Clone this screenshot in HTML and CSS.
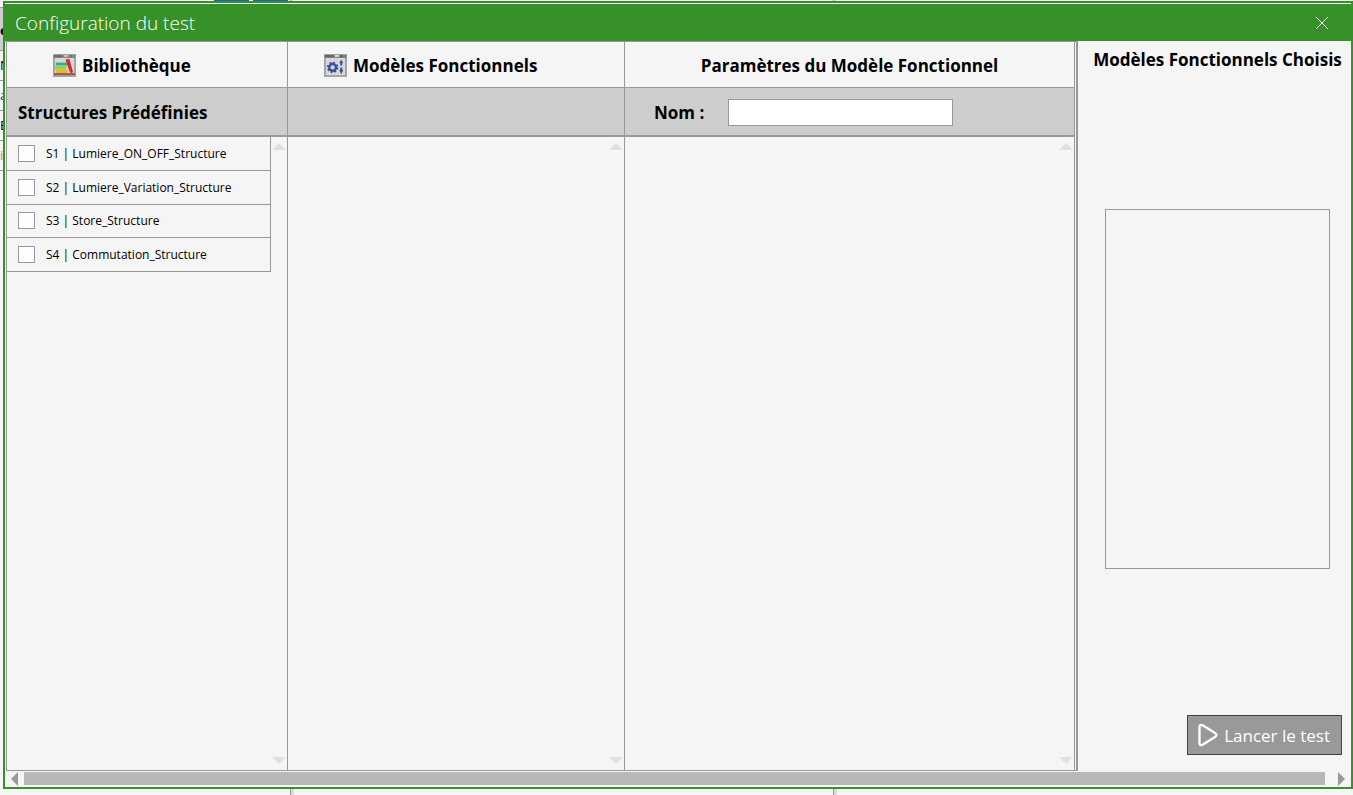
FILE: index.html
```html
<!DOCTYPE html>
<html lang="fr">
<head>
<meta charset="utf-8">
<title>Configuration du test</title>
<link rel="stylesheet" href="styles.css">
</head>
<body>
<div class="backdrop" aria-hidden="true">
  <div class="back-list">
    <div class="back-row back-head">e</div>
    <div class="back-row">N</div>
    <div class="back-row back-blue">a</div>
    <div class="back-row">E</div>
    <div class="back-row back-orange">i</div>
  </div>
  <span class="back-tab tab-one"></span>
  <span class="back-tab tab-two"></span>
  <span class="back-rule rule-one"></span>
  <span class="back-rule rule-two"></span>
</div>
<section class="dialog" role="dialog" aria-labelledby="dialog-title">
  <header class="titlebar">
    <h1 class="title" id="dialog-title">Configuration du test</h1>
    <button class="close" type="button" aria-label="Fermer">
      <svg width="12" height="12" viewBox="0 0 12 12"><path d="M0 0L12 12M12 0L0 12" stroke="#fff" fill="none"/></svg>
    </button>
  </header>
  <main class="content">
    <div class="columns">
      <section class="column library">
        <h2 class="column-head">
          <svg class="icon" width="23" height="23" viewBox="0 0 24 24">
            <path fill="#a3a3a3" d="M0 0h24v24H0z"/><path fill="#6e6e6e" d="M1 1h22v3H1z"/><path fill="#d8d8d8" d="M2 4h20v16H2z"/>
            <path fill="#c8c8c8" d="M11 1h5v2h-5z"/><path fill="#4cc34c" d="M17 1h1v2h-1zM20 1h2v2h-2z"/>
            <path fill="#1fb58f" d="M3 9h12v3H3z"/><path fill="#8ed36a" d="M2 12h12v4H2z"/><path fill="#f2b51d" d="M3 16h12v4H3z"/>
            <path fill="#d92b2b" d="M13 6l4-1 4 14-3 1z"/><path fill="#8b6147" d="M1 20h22v2H1z"/>
          </svg>
          <span>Bibliothèque</span>
        </h2>
        <div class="column-sub">Structures Prédéfinies</div>
        <div class="column-body">
          <ul class="structures">
            <li class="structure"><label class="choice"><input class="check" type="checkbox">S1 | Lumiere_ON_OFF_Structure</label></li>
            <li class="structure"><label class="choice"><input class="check" type="checkbox">S2 | Lumiere_Variation_Structure</label></li>
            <li class="structure"><label class="choice"><input class="check" type="checkbox">S3 | Store_Structure</label></li>
            <li class="structure"><label class="choice"><input class="check" type="checkbox">S4 | Commutation_Structure</label></li>
          </ul>
          <div class="vscroll"><span class="arrow up"></span><span class="arrow down"></span></div>
        </div>
      </section>
      <section class="column models">
        <h2 class="column-head">
          <svg class="icon" width="23" height="23" viewBox="0 0 24 24">
            <path fill="#a3a3a3" d="M0 0h24v24H0z"/><path fill="#666" d="M1 1h22v3H1z"/><path fill="#d8d8d8" d="M2 4h20v18H2z"/>
            <path fill="#ddd" d="M11 1h5v2h-5z"/><path fill="#4cc34c" d="M20 1h2v2h-2z"/>
            <circle cx="9" cy="14" r="3.5" fill="none" stroke="#3850a2" stroke-width="2.5"/>
            <circle cx="9" cy="14" r="5" fill="none" stroke="#3850a2" stroke-width="2" stroke-dasharray="2 1.93"/>
            <path fill="#3850a2" d="M18 6l2 3-1 1v2h-2v-2l-1-1zM17 14h2v2l1 1-2 4-2-4 1-1z"/>
          </svg>
          <span>Modèles Fonctionnels</span>
        </h2>
        <div class="column-sub"></div>
        <div class="column-body"><div class="vscroll"><span class="arrow up"></span><span class="arrow down"></span></div></div>
      </section>
      <section class="column params">
        <h2 class="column-head">Paramètres du Modèle Fonctionnel</h2>
        <div class="column-sub"><label class="name-label" for="name">Nom :</label><input class="name-input" id="name" type="text"></div>
        <div class="column-body"><div class="vscroll"><span class="arrow up"></span><span class="arrow down"></span></div></div>
      </section>
    </div>
    <aside class="chosen">
      <h2 class="chosen-title">Modèles Fonctionnels Choisis</h2>
      <div class="chosen-list"></div>
      <button class="launch" type="button">
        <svg width="20" height="24" viewBox="0 0 20 24"><path d="M1.500 4.500V19.500Q1.500 23.500 5 21.500L17 14Q20 12 17 10L5 2.500Q1.500.5 1.500 4.500Z" fill="none" stroke="#fff" stroke-width="2.300"/></svg>
        <span>Lancer le test</span>
      </button>
    </aside>
  </main>
  <div class="hscroll"><span class="arrow left"></span><span class="thumb"></span><span class="arrow right"></span></div>
</section>
</body>
</html>
```
FILE: styles.css
```css
* { box-sizing: border-box; }
body {
  margin: 0;
  min-height: 100vh;
  display: flex;
  padding: 1px 0 6px 3px;
  background: #f5f5f5;
  color: #000;
  font-family: "Open Sans", "Noto Sans", sans-serif;
  overflow: hidden;
}
.backdrop { position: absolute; inset: 0; overflow: hidden; }
.back-list { width: 12px; padding-top: 7px; font-size: 13px; }
.back-row { height: 30px; line-height: 29px; border-bottom: 1px solid #999; }
.back-head { height: 44px; line-height: 44px; background: #cdcdcd; font-weight: 700; border-top: 1px solid #999; }
.back-blue { color: #004a80; }
.back-orange { color: #d98a1e; }
.back-tab { position: absolute; top: 0; width: 35px; height: 1px; background: #0d6eb8; }
.tab-one { left: 214px; }
.tab-two { left: 253px; }
.back-rule { position: absolute; top: 0; bottom: 0; width: 4px; border-left: 1px solid #999; background: #dcdcdc; }
.rule-one { left: 290px; }
.rule-two { left: 833px; }

.dialog {
  position: relative;
  flex: 1;
  display: flex;
  flex-direction: column;
  border: 2px solid #359128;
  background: #f5f5f5;
}
.titlebar {
  display: flex;
  align-items: center;
  justify-content: space-between;
  height: 38px;
  padding: 0 23px 0 10px;
  border-top: 1px solid #fff;
  background: #359128;
  color: #fff;
}
.title { margin: 0; font-size: 19px; font-weight: 300; line-height: 36px; }
.close { display: flex; padding: 0; border: 0; background: none; }

.content { flex: 1; display: flex; }
.columns {
  flex: 1;
  display: grid;
  grid-template-columns: 282fr 337fr 450fr;
  margin-left: 1px;
  padding-right: 1px;
  border: 1px solid #999;
  border-width: 1px 2px 1px 0;
}
.column { display: flex; flex-direction: column; border-right: 1px solid #999; min-width: 0; }
.library { border-left: 1px solid #999; }
.column-head {
  display: flex;
  align-items: center;
  gap: 6px;
  height: 46px;
  margin: 0;
  padding-top: 2px;
  border-bottom: 1px solid #999;
  font-size: 17px;
  font-weight: 700;
}
.library .column-head { padding-left: 46px; }
.models .column-head { padding-left: 36px; }
.params .column-head { justify-content: center; }
.column-sub {
  display: flex;
  align-items: center;
  height: 49px;
  padding: 1px 0 0 11px;
  border-bottom: 2px solid #999;
  background: #cdcdcd;
  font-size: 17px;
  font-weight: 700;
}
.params .column-sub { padding-left: 29px; }
.name-label { width: 74px; }
.name-input { width: 225px; height: 27px; border: 1px solid #999; background: #fff; font: inherit; }
.column-body { flex: 1; display: flex; justify-content: flex-end; }
.structures { flex: 1; display: flex; flex-direction: column; height: 135px; margin: 0; padding: 0; list-style: none; }
.structure { flex: 1; border: 1px solid #999; border-width: 0 1px 1px 0; }
.choice { display: flex; align-items: center; height: 100%; padding-left: 11px; font-size: 12px; }
.check { appearance: none; width: 17px; height: 17px; margin: 0 11px 0 0; border: 1px solid #999; background: #fff; }
.vscroll { display: flex; flex-direction: column; justify-content: space-between; align-items: center; width: 16px; padding: 6px 0; }
.arrow { width: 0; height: 0; border: 0 solid transparent; }
.up { border-width: 0 7px 7px; border-bottom-color: #e0e0e0; }
.down { border-width: 7px 7px 0; border-top-color: #e0e0e0; }

.chosen { display: flex; flex-direction: column; align-items: center; width: 273px; padding: 6px 9px 16px 15px; }
.chosen-title { margin: 0; font-size: 17px; font-weight: 700; line-height: 26px; white-space: nowrap; }
.chosen-list { width: 225px; height: 360px; margin-top: 136px; border: 1px solid #999; }
.launch {
  display: flex;
  align-items: center;
  gap: 6px;
  height: 40px;
  margin-top: auto;
  margin-left: auto;
  padding: 0 11px 0 10px;
  border: 1px solid #444;
  background: #999;
  color: #fff;
  font: 400 17px "Open Sans", "Noto Sans", sans-serif;
}
.hscroll { display: flex; align-items: flex-start; height: 16px; padding: 1px 6px 0; }
.thumb { flex: 1; height: 13px; margin: 0 13px 0 6px; background: #b8b8b8; }
.left { border-width: 7px 7px 7px 0; border-right-color: #999; }
.right { border-width: 7px 0 7px 7px; border-left-color: #999; }
```
